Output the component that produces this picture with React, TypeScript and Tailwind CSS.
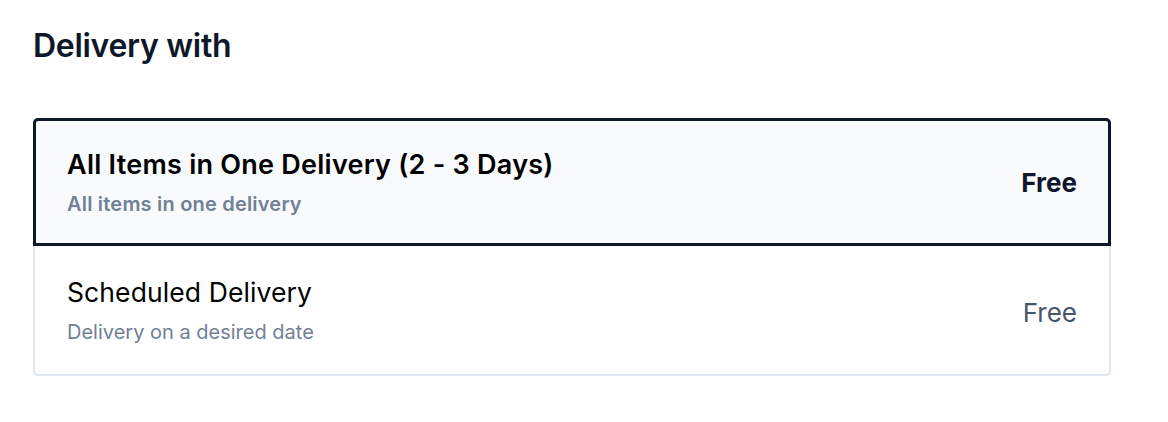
import React from "react";

interface Option {
    title: string;
    subtitle: string;
    price: string;
}

const options: Option[] = [
    { title: "All Items in One Delivery (2 - 3 Days)", subtitle: "All items in one delivery", price: "Free" },
    { title: "Scheduled Delivery", subtitle: "Delivery on a desired date", price: "Free" },
];

export default function App() {
    const selected = 0;

    return (
        <div className="w-[1168px] h-[422px] bg-white font-['Inter',sans-serif] text-[#0f172a]">
            <div className="pl-[33px] pt-[26px] pr-[57px]">
                <h2 className="text-[32px] leading-[40px] font-semibold tracking-[-0.3px]">Delivery with</h2>
                <div className="mt-[52px] flex flex-col">
                    {options.map((o, i) => {
                        const active = i === selected;
                        return (
                            <div
                                key={o.title}
                                className={
                                    active
                                        ? "h-[128px] flex items-center justify-between px-[31px] border-[3px] border-[#0f172a] bg-[#f8fafc] rounded-t-[5px]"
                                        : "h-[130px] flex items-center justify-between px-[32px] border-2 border-t-0 border-[#e2e8f0] rounded-b-[5px] bg-white"
                                }
                            >
                                <div className="flex flex-col">
                                    <div
                                        className={
                                            active
                                                ? "text-[27px] leading-[34px] font-semibold tracking-[0.25px] text-black"
                                                : "text-[26.5px] leading-[34px] font-normal tracking-[0.1px] text-black"
                                        }
                                    >
                                        {o.title}
                                    </div>
                                    <div
                                        className={
                                            active
                                                ? "mt-[9px] text-[20px] leading-[26px] font-semibold tracking-[0.2px] text-[#718096]"
                                                : "mt-[10px] text-[20px] leading-[26px] font-normal text-[#718096]"
                                        }
                                    >
                                        {o.subtitle}
                                    </div>
                                </div>
                                <div
                                    className={
                                        active
                                            ? "text-[26px] font-bold text-[#0f172a]"
                                            : "mt-[4px] text-[26px] font-normal text-[#475569]"
                                    }
                                >
                                    {o.price}
                                </div>
                            </div>
                        );
                    })}
                </div>
            </div>
        </div>
    );
}
